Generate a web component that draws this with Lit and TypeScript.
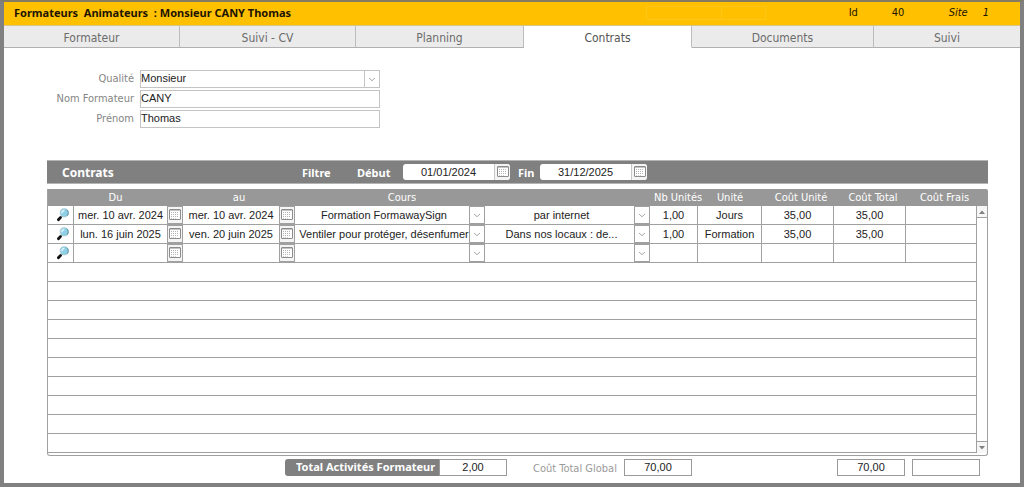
import { LitElement, html, css, svg, nothing } from "lit";
import { customElement, property, state } from "lit/decorators.js";
import { classMap } from "lit/directives/class-map.js";

interface Contract {
  from: string;
  to: string;
  course: string;
  place: string;
  units: string;
  unit: string;
  unitCost: string;
  total: string;
  fees: string;
}

const CONTRACTS: Contract[] = [
  { from: "mer. 10 avr. 2024", to: "mer. 10 avr. 2024", course: "Formation FormawaySign", place: "par internet", units: "1,00", unit: "Jours", unitCost: "35,00", total: "35,00", fees: "" },
  { from: "lun. 16 juin 2025", to: "ven. 20 juin 2025", course: "Ventiler pour protéger, désenfumer", place: "Dans nos locaux : de...", units: "1,00", unit: "Formation", unitCost: "35,00", total: "35,00", fees: "" },
  { from: "", to: "", course: "", place: "", units: "", unit: "", unitCost: "", total: "", fees: "" },
];

const EMPTY_ROWS = 10;

const TABS = [
  { label: "Formateur", grow: "w1" },
  { label: "Suivi - CV", grow: "w1" },
  { label: "Planning", grow: "w2" },
  { label: "Contrats", grow: "w2" },
  { label: "Documents", grow: "w3" },
  { label: "Suivi", grow: "w4" },
];

const calendarIcon = html`<svg width="12" height="12" viewBox="0 0 12 12" aria-hidden="true">
  <rect x="0.5" y="0.5" width="11" height="10" rx="0.5" fill="#fff" stroke="#8c8c8c" />
  <path d="M1 1.5H11" stroke="#c4c4c4" stroke-width="1" />
  ${[3.5, 5.5, 7.5].map((y) => svg`<path d="M2 ${y}H10" stroke="#b4b4b4" stroke-width="1" stroke-dasharray="1 1" />`)}
  <path d="M2 9.5H7" stroke="#d0d0d0" stroke-width="1" stroke-dasharray="1 1" />
</svg>`;

const chevronIcon = html`<svg class="chevron" width="8" height="5" viewBox="0 0 8 5" aria-hidden="true">
  <path d="M1 1L4 3.7L7 1" fill="none" stroke="#a8a8a8" stroke-width="1" />
</svg>`;

const magnifierIcon = html`<svg width="14" height="14" viewBox="0 0 14 14" aria-hidden="true">
  <path d="M4.6 9.4L2.4 11.8" stroke="#111" stroke-width="2.8" stroke-linecap="round" />
  <path d="M6.3 7.6L5 9" stroke="#5d6b70" stroke-width="1.4" />
  <ellipse cx="8.2" cy="4.8" rx="4" ry="4.1" fill="#8fd0e6" stroke="#a3c4cf" stroke-width="0.8" />
  <path d="M5.8 5.2C5.9 3.4 7 2.4 8.4 2.2" fill="none" stroke="#dff5fc" stroke-width="1.4" />
  <path d="M10.6 1.6C12.6 3 12.8 6 11 7.9" fill="none" stroke="#5d8fa0" stroke-width="1" />
</svg>`;

@customElement("date-field")
class DateField extends LitElement {
  static styles = css`
    :host { display: block; height: 100%; }
    .box { display: flex; height: 100%; align-items: stretch; }
    input {
      flex: 1; min-width: 0; width: 0; border: 0; padding: 0; margin: 0; outline: 0;
      background: transparent; text-align: center; color: #222;
      font: 11px/16px "Liberation Sans", Arial, sans-serif;
    }
    button {
      flex: none; display: flex; align-items: center; justify-content: center;
      width: 16px; padding: 0; border: 1px solid #a0a0a0; background: #f4f4f4;
    }
    :host([captioned]) { display: flex; align-items: center; justify-content: space-between; }
    :host([captioned]) .box { width: 107px; background: #fff; border-radius: 3px; overflow: hidden; }
    :host([captioned]) button { border-width: 0 0 0 1px; border-color: #c8c8c8; }
  `;
  @property() value = "";
  @property() label = "";
  @property({ type: Boolean, reflect: true }) captioned = false;
  render() {
    return html`${this.captioned ? html`<label for="date">${this.label}</label>` : nothing}
      <div class="box">
        <input id="date" type="text" .value=${this.value} aria-label=${this.label} />
        <button type="button" aria-label="Calendrier : ${this.label}">${calendarIcon}</button>
      </div>`;
  }
}

@customElement("app-root")
class AppRoot extends LitElement {
  static styles = css`
    :host {
      display: block;
      --ui: "DejaVu Sans Condensed", "Noto Sans", sans-serif;
      --strong: "Noto Sans", sans-serif;
      --data: "Liberation Sans", Arial, sans-serif;
      --line: #a0a0a0;
      font-family: var(--ui);
      font-size: 11px;
    }
    * { box-sizing: border-box; }
    .frame {
      min-height: 100vh; background: #fff;
      border: 4px solid #808080; border-top: 2px solid #857a62;
      display: flex; flex-direction: column;
    }
    .title {
      display: flex; align-items: center; height: 24px; padding: 0 31px 2px 10px;
      background: #ffc000; color: #1c1400; border-bottom: 1px solid #d8c690;
    }
    .title h1 { margin: 0; font: bold 11px/16px var(--strong); white-space: pre; }
    .slots { display: flex; height: 14px; margin-left: auto; border: 1px solid #ffc61a; }
    .slot { width: 75px; border-right: 1px solid #ffc61a; }
    .slot.small { width: 43px; border: 0; }
    .meta { display: grid; grid-template-columns: 43px 57px 34px auto; margin-left: 83px; }
    .meta i { font-style: italic; }

    .tabs { display: flex; height: 22px; }
    .tab {
      min-width: 0; padding: 2px 0 0; font: 12px/18px var(--ui); color: #6c6c6c;
      background: #ebebeb; border: 0; border-right: 1px solid #bcbcbc; border-bottom: 1px solid #b0b0b0;
    }
    .tab:last-child { border-right: 0; }
    .tab.active { background: #fff; border-bottom-color: #fff; color: #555; }
    .w1 { flex: 176 0 0; }
    .w2 { flex: 168 0 0; }
    .w3 { flex: 182 0 0; }
    .w4 { flex: 147 0 0; }

    .person {
      display: grid; grid-template-columns: 130px 240px; column-gap: 6px; row-gap: 2px;
      padding: 22px 0 32px;
    }
    .person label { text-align: right; line-height: 18px; color: #858585; }
    .person .field { width: 100%; }
    .field {
      height: 18px; border: 1px solid #c4c4c4; padding: 0 0 2px; margin: 0; outline: 0; background: #fff;
      color: #222; font: 11px/14px var(--data);
    }
    .picker { display: grid; grid-template-columns: 1fr 16px; height: 18px; }
    .picker select { grid-area: 1 / 1 / 2 / 3; min-width: 0; }
    .picker .arrow {
      grid-area: 1 / 2; display: flex; align-items: center; justify-content: center;
      pointer-events: none; border: 1px solid #c4c4c4;
    }
    select { appearance: none; border-radius: 0; }
    .cellpick { height: 18px; }
    .cellpick select {
      border: 0; background: transparent; padding: 0 16px 0 4px; width: 100%; outline: 0;
      text-align: center; text-align-last: center; font: 11px/16px var(--data); color: #222;
    }
    .cellpick .arrow { border-color: var(--line); background: #fff; }

    .sheet { padding: 0 32px 0 43px; }
    .band {
      display: flex; align-items: center; height: 24px; margin-bottom: 5px; padding: 0 0 0 15px;
      background: #808080; border: 1px solid #b4b4b4; border-left-width: 0; border-right-width: 0;
      color: #fff; font-family: var(--strong); font-weight: bold;
    }
    .band h2 { margin: 0; width: 240px; font-size: 12px; }
    .band .filter { width: 55px; }
    .band date-field { height: 16px; width: 153px; }
    .band date-field.end { width: 129px; margin-left: 8px; }

    .gridbox { display: grid; grid-template-columns: minmax(0, 1fr) 12px; }
    table { width: 100%; border-collapse: separate; border-spacing: 0; table-layout: fixed; border-left: 1px solid var(--line); }
    th {
      height: 17px; padding: 0; background: #989898; color: #fff; font-weight: normal;
      font-size: 11px; line-height: 17px; white-space: nowrap; text-align: center;
    }
    th.indent { padding-left: 24px; }
    th.units { padding-left: 4px; }
    th.cost { padding-left: 6px; }
    td { height: 19px; padding: 0; border-bottom: 1px solid var(--line); }
    .line td { border-right: 1px solid var(--line); }
    .line td:last-child, .line td.open { border-right: 0; }
    .line date-field { height: 18px; }
    .c-icon { width: 26px; }
    .c-from { width: 109px; }
    .c-to { width: 112px; }
    .c-course { width: 190px; }
    .c-place { width: 165px; }
    .c-units { width: 48px; }
    .c-unit { width: 64px; }
    .c-cost { width: 72px; }
    .c-fees { width: 71px; }
    .zoom { display: flex; width: 100%; height: 18px; padding: 0 0 0 8px; align-items: center; border: 0; background: none; }
    .num {
      display: block; width: 100%; height: 18px; border: 0; padding: 0; outline: 0; background: transparent;
      text-align: center; font: 11px/16px var(--data); color: #222;
    }
    .scroll { display: flex; flex-direction: column; justify-content: space-between; }
    .scroll .cap { height: 17px; background: #989898; border-radius: 0 2px 0 0; }
    .track {
      flex: 1; display: flex; flex-direction: column; justify-content: space-between;
      border: 1px solid var(--line); border-top: 0; border-bottom: 0;
    }
    .track button {
      display: flex; align-items: center; justify-content: center; height: 12px; padding: 0;
      border: 0; background: #f6f6f6;
    }
    .track .up { border-bottom: 1px solid var(--line); }
    .track .down { border-top: 1px solid var(--line); }
    .edge { grid-column: 1 / 3; height: 3px; border: 1px solid var(--line); border-top: 0; border-radius: 0 0 3px 3px; }

    .totals { display: flex; align-items: flex-start; padding: 3px 8px 0 238px; }
    .totals .field { width: 68px; height: 17px; border-color: #9a9a9a; text-align: center; }
    .totals .main {
      height: 17px; width: 154px; padding-left: 11px; font: bold 11px/16px var(--strong);
      color: #fff; background: #808080; border-radius: 3px 0 0 3px; white-space: nowrap;
    }
    .totals .global { width: 91px; margin: 2px 0 0 26px; line-height: 16px; color: #9a9a9a; white-space: nowrap; }
    .totals .sums { display: flex; gap: 7px; margin-left: auto; }
  `;

  @state() private active = "Contrats";

  private input(value: string, label: string) {
    return html`<input class="num" type="text" .value=${value} aria-label=${label} />`;
  }

  private select(value: string, label: string) {
    return html`<div class="picker cellpick">
      <select aria-label=${label}><option>${value}</option></select>
      <span class="arrow">${chevronIcon}</span>
    </div>`;
  }

  private row(c: Contract) {
    return html`<tr class="line">
      <td><button class="zoom" type="button" aria-label="Ouvrir">${magnifierIcon}</button></td>
      <td class="open"><date-field .value=${c.from} label="Du"></date-field></td>
      <td class="open"><date-field .value=${c.to} label="au"></date-field></td>
      <td class="open">${this.select(c.course, "Cours")}</td>
      <td class="open">${this.select(c.place, "Lieu")}</td>
      <td>${this.input(c.units, "Nb Unités")}</td>
      <td>${this.input(c.unit, "Unité")}</td>
      <td>${this.input(c.unitCost, "Coût Unité")}</td>
      <td>${this.input(c.total, "Coût Total")}</td>
      <td>${this.input(c.fees, "Coût Frais")}</td>
    </tr>`;
  }

  render() {
    return html`<main class="frame">
      <header class="title">
        <h1>Formateurs  Animateurs  : Monsieur CANY Thomas</h1>
        <div class="slots"><span class="slot"></span><span class="slot small"></span></div>
        <div class="meta"><span>Id</span><span>40</span><i>Site</i><i>1</i></div>
      </header>
      <nav class="tabs">
        ${TABS.map((t) => html`<button type="button"
          class=${classMap({ tab: true, [t.grow]: true, active: t.label === this.active })}
          @click=${() => (this.active = t.label)}>${t.label}</button>`)}
      </nav>
      <form class="person">
        <label for="title">Qualité</label>
        <div class="picker">
          <select class="field" id="title"><option>Monsieur</option></select>
          <span class="arrow">${chevronIcon}</span>
        </div>
        <label for="last">Nom Formateur</label>
        <input class="field" id="last" type="text" value="CANY" />
        <label for="first">Prénom</label>
        <input class="field" id="first" type="text" value="Thomas" />
      </form>
      <section class="sheet">
        <div class="band">
          <h2>Contrats</h2>
          <span class="filter">Filtre</span>
          <date-field captioned value="01/01/2024" label="Début"></date-field>
          <date-field class="end" captioned value="31/12/2025" label="Fin"></date-field>
        </div>
        <div class="gridbox">
          <table>
            <colgroup>
              <col class="c-icon" /><col class="c-from" /><col class="c-to" /><col class="c-course" /><col class="c-place" />
              <col class="c-units" /><col class="c-unit" /><col class="c-cost" /><col class="c-cost" /><col class="c-fees" />
            </colgroup>
            <thead>
              <tr>
                <th colspan="2">Du</th><th>au</th><th class="indent">Cours</th><th></th>
                <th class="units">Nb Unités</th><th>Unité</th><th class="cost">Coût Unité</th><th class="cost">Coût Total</th><th class="cost">Coût Frais</th>
              </tr>
            </thead>
            <tbody>
              ${CONTRACTS.map((c) => this.row(c))}
              ${Array.from({ length: EMPTY_ROWS }, () => html`<tr><td colspan="10"></td></tr>`)}
            </tbody>
          </table>
          <div class="scroll">
            <div class="cap"></div>
            <div class="track">
              <button class="up" type="button" aria-label="Monter"><svg width="6" height="4" viewBox="0 0 6 4"><path d="M0 4L3 0.5L6 4Z" fill="#808080" /></svg></button>
              <button class="down" type="button" aria-label="Descendre"><svg width="6" height="4" viewBox="0 0 6 4"><path d="M0 0L3 3.5L6 0Z" fill="#808080" /></svg></button>
            </div>
          </div>
          <div class="edge"></div>
        </div>
        <div class="totals">
          <label class="main" for="count">Total Activités Formateur</label>
          <input class="field" id="count" type="text" value="2,00" />
          <label class="global" for="global">Coût Total Global</label>
          <input class="field" id="global" type="text" value="70,00" />
          <div class="sums">
            <input class="field" type="text" value="70,00" aria-label="Somme Coût Total" />
            <input class="field" type="text" aria-label="Somme Coût Frais" />
          </div>
        </div>
      </section>
    </main>`;
  }
}
